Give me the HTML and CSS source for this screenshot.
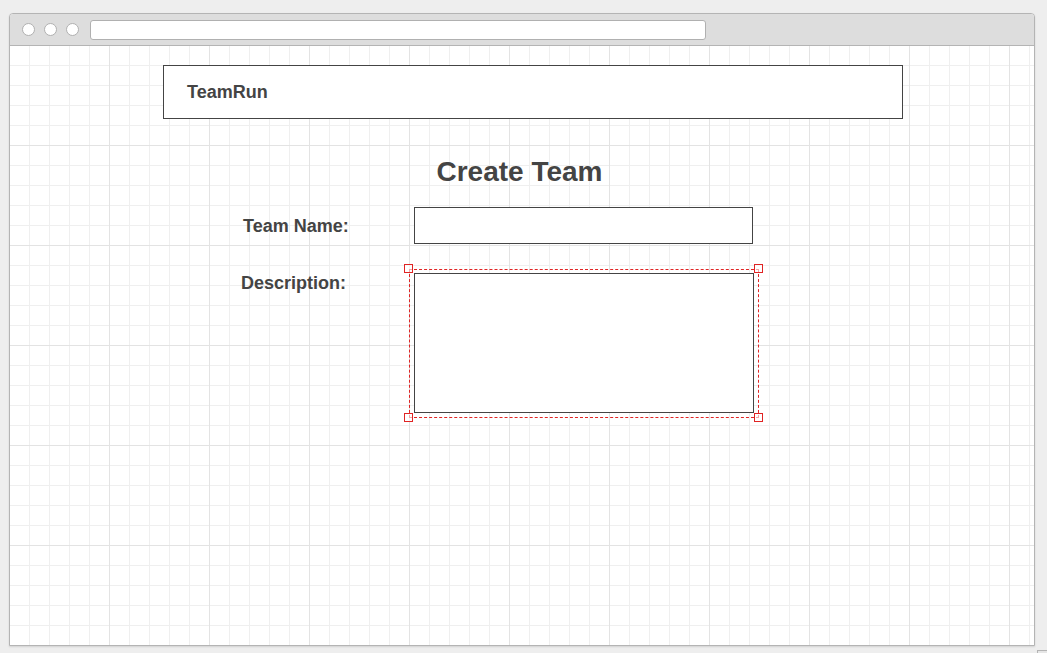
FILE: index.html
```html
<!DOCTYPE html>
<html>
<head>
<meta charset="utf-8">
<title>TeamRun - Create Team</title>
<link rel="stylesheet" href="styles.css">
</head>
<body>
<div class="window">
  <div class="titlebar">
    <span class="dot"></span>
    <span class="dot"></span>
    <span class="dot"></span>
    <span class="address"></span>
  </div>
  <div class="canvas">
    <header class="appbar">
      <span class="brand">TeamRun</span>
    </header>
    <h1 class="title">Create Team</h1>
    <div class="form">
      <label class="label label-name">Team Name:</label>
      <div class="input"></div>
      <label class="label label-desc">Description:</label>
      <div class="area-wrap">
        <div class="textarea"></div>
        <div class="selection">
          <span class="handle tl"></span>
          <span class="handle tr"></span>
          <span class="handle bl"></span>
          <span class="handle br"></span>
        </div>
      </div>
    </div>
  </div>
</div>
<div class="corner"></div>
</body>
</html>
```

FILE: styles.css
```css
* { box-sizing: border-box; }

html, body {
  margin: 0;
  padding: 0;
  background: #eeeeee;
  font-family: "Liberation Sans", Arial, sans-serif;
  color: #444444;
  overflow: hidden;
}

body {
  width: 1047px;
  height: 653px;
  position: relative;
}

.window {
  margin: 13px 0 0 9px;
  width: 1026px;
  height: 633px;
  border: 1px solid #b4b4b4;
  border-radius: 4px 4px 0 0;
  background: #ffffff;
  box-shadow: 0 1px 2px rgba(0, 0, 0, 0.12);
  display: flex;
  flex-direction: column;
  overflow: hidden;
}

.titlebar {
  height: 32px;
  flex: none;
  background: #dddddd;
  border-bottom: 1px solid #b4b4b4;
  display: flex;
  align-items: center;
  padding-left: 12px;
  gap: 9px;
}

.dot {
  width: 13px;
  height: 13px;
  border-radius: 50%;
  background: #ffffff;
  border: 1px solid #b0b0b0;
  flex: none;
}

.address {
  margin-left: 2px;
  width: 616px;
  height: 20px;
  background: #ffffff;
  border: 1px solid #b0b0b0;
  border-radius: 3px;
  flex: none;
}

.canvas {
  flex: 1;
  background-color: #ffffff;
  background-image:
    linear-gradient(to right, #e3e3e3 1px, transparent 1px),
    linear-gradient(to bottom, #e3e3e3 1px, transparent 1px),
    linear-gradient(to right, #efefef 1px, transparent 1px),
    linear-gradient(to bottom, #efefef 1px, transparent 1px);
  background-size: 100px 100px, 100px 100px, 20px 20px, 20px 20px;
  background-position: 99px 99px, 99px 99px, 19px 19px, 19px 19px;
  padding-top: 19px;
}

.appbar {
  margin-left: 153px;
  width: 740px;
  height: 54px;
  border: 1px solid #444444;
  background: #ffffff;
  display: flex;
  align-items: center;
  padding-left: 23px;
}

.brand {
  font-size: 18px;
  line-height: 20px;
  font-weight: bold;
}

.title {
  margin: 37px 0 0 0;
  padding-right: 5px;
  text-align: center;
  font-size: 28px;
  line-height: 32px;
  font-weight: bold;
}

.form {
  margin: 19px 0 0 230px;
  display: grid;
  grid-template-columns: 174px 340px;
  row-gap: 29px;
}

.label {
  font-size: 18px;
  line-height: 20px;
  font-weight: bold;
}

.label-name {
  align-self: center;
  padding-left: 3px;
}

.label-desc {
  align-self: start;
  padding-left: 1px;
}

.input {
  width: 339px;
  height: 37px;
  border: 1px solid #444444;
  background: #ffffff;
}

.area-wrap {
  position: relative;
  width: 340px;
  height: 140px;
}

.textarea {
  width: 340px;
  height: 140px;
  border: 1px solid #444444;
  background: #ffffff;
}

.selection {
  position: absolute;
  left: -5px;
  top: -4px;
  right: -5px;
  bottom: -5px;
  border: 1px dashed #e02424;
}

.handle {
  position: absolute;
  width: 9px;
  height: 9px;
  border: 1px solid #e02424;
  background: rgba(255, 255, 255, 0.6);
}

.handle.tl { left: -6px; top: -6px; }
.handle.tr { right: -5px; top: -6px; }
.handle.bl { left: -6px; bottom: -5px; }
.handle.br { right: -5px; bottom: -5px; }

.corner {
  position: absolute;
  left: 1037px;
  top: 650px;
  width: 14px;
  height: 14px;
  border: 1px solid #b4b4b4;
  background: #e6e6e6;
}
```
